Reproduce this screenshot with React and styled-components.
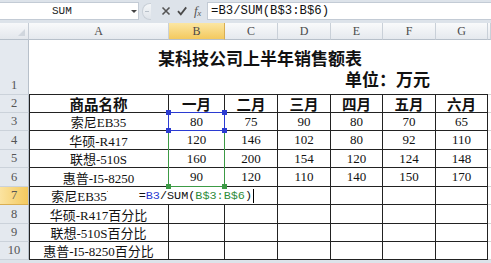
import React from 'react'
import styled, { createGlobalStyle } from 'styled-components'

const GlobalStyle = createGlobalStyle`
  html, body { margin: 0; padding: 0; background: #ffffff; }
  body { font-family: "Liberation Serif", "Noto Sans CJK SC", serif; }
`

const COLS = ['A', 'B', 'C', 'D', 'E', 'F', 'G']
const ROW_HEIGHTS = [18, 18, 19, 18, 19, 18, 19, 18, 18]

const ROWS = [
  { n: 2, bold: true, cells: ['商品名称', '一月', '二月', '三月', '四月', '五月', '六月'] },
  { n: 3, cells: ['索尼EB35', '80', '75', '90', '80', '70', '65'] },
  { n: 4, cells: ['华硕-R417', '120', '146', '102', '80', '92', '110'] },
  { n: 5, cells: ['联想-510S', '160', '200', '154', '120', '124', '148'] },
  { n: 6, cells: ['惠普-I5-8250', '90', '120', '110', '140', '150', '170'] },
  { n: 7, active: true, cells: ['索尼EB35百分比', '', '', '', '', '', ''] },
  { n: 8, cells: ['华硕-R417百分比', '', '', '', '', '', ''] },
  { n: 9, cells: ['联想-510S百分比', '', '', '', '', '', ''] },
  { n: 10, cells: ['惠普-I5-8250百分比', '', '', '', '', '', ''] },
]

const Window = styled.div`
  width: 491px;
  height: 263px;
  overflow: hidden;
  background: #dde3ea;
  display: flex;
  flex-direction: column;
`

/* FORMULA BAR */
const FormulaBar = styled.div`
  height: 18px;
  margin-top: 2px;
  margin-bottom: 3px;
  display: flex;
`

const NameBox = styled.div`
  width: 139px;
  box-sizing: border-box;
  background: #fff;
  border: 1px solid #c3cbd5;
  border-left: none;
  display: flex;
  align-items: center;
  padding-left: 52px;
  font-family: "Liberation Mono", monospace;
  font-size: 11px;
  color: #222;
  position: relative;
`

const DropArrow = styled.span`
  position: absolute;
  left: 131px;
  top: 7px;
  border-left: 3px solid transparent;
  border-right: 3px solid transparent;
  border-top: 3px solid #444;
`

const Tools = styled.div`
  width: 68px;
  display: flex;
  align-items: center;
  padding-left: 3px;
  box-sizing: border-box;
  gap: 6px;
`

const Grip = styled.span`
  width: 8px;
  height: 15px;
  border-radius: 8px 0 0 8px;
  border: 1px solid #c9d0d8;
  border-right: none;
  background: linear-gradient(#f4f6f8, #dfe4ea);
  margin-right: 4px;
  display: flex;
  align-items: center;
  justify-content: center;
  &::after {
    content: '';
    width: 4px;
    height: 1px;
    background: #b9c1ca;
  }
`

const ToolIcon = styled.svg`
  width: 10px;
  height: 10px;
  flex: none;
`

const Fx = styled.span`
  font-family: "Liberation Serif", serif;
  font-style: italic;
  font-size: 13px;
  color: #555;
  margin-left: 1px;
  letter-spacing: -0.5px;
  sub { font-size: 9px; vertical-align: -1px; }
`

const FormulaInput = styled.div`
  flex: 1;
  background: #fff;
  border: 1px solid #c3cbd5;
  border-right: none;
  display: flex;
  align-items: center;
  padding-left: 3px;
  font-family: "Liberation Mono", monospace;
  font-size: 12.3px;
  color: #111;
`

/* SHEET */
const Sheet = styled.div`
  display: grid;
  grid-template-columns: 29px 140px 56px 53px 53px 52px 53px 52px 1fr;
  grid-template-rows: 17px 55px ${ROW_HEIGHTS.map(h => h + 'px').join(' ')};
  background: #fff;
`

const Corner = styled.div`
  grid-row: 1;
  grid-column: 1;
  background: linear-gradient(#f7f8fa, #e3e7ec);
  border-right: 1px solid #c5ccd5;
  border-bottom: 1px solid #b7c0ca;
  box-sizing: border-box;
  position: relative;
  &::after {
    content: '';
    position: absolute;
    right: 3px;
    bottom: 3px;
    border-left: 7px solid transparent;
    border-bottom: 7px solid #d0d6dd;
  }
`

const ColHead = styled.div`
  grid-row: 1;
  grid-column: ${p => p.$c};
  background: ${p => p.$active
    ? 'linear-gradient(#fbe6a2, #f3c95e)'
    : 'linear-gradient(#f9fafb, #e5e9ee)'};
  border-right: 1px solid ${p => p.$active ? '#d9ae52' : '#c9d0d8'};
  border-bottom: 1px solid #b7c0ca;
  box-sizing: border-box;
  display: flex;
  align-items: center;
  justify-content: center;
  font-family: "Liberation Serif", serif;
  font-size: 12px;
  color: #4a4a4a;
`

const RowHead = styled.div`
  grid-row: ${p => p.$r};
  grid-column: 1;
  background: ${p => p.$active
    ? 'linear-gradient(90deg, #fbe3a0, #f3c95e)'
    : '#e4e9ef'};
  border-right: 1px solid #b7c0ca;
  border-bottom: 1px solid ${p => p.$active ? '#d9ae52' : '#cbd2da'};
  box-sizing: border-box;
  display: flex;
  align-items: flex-end;
  justify-content: center;
  padding-bottom: 1px;
  font-family: "Liberation Serif", serif;
  font-size: 12.5px;
  color: #555;
`

const TitleCell = styled.div`
  grid-row: 2;
  grid-column: 2 / 9;
  border-bottom: 1px solid #222;
  box-sizing: border-box;
  display: flex;
  flex-direction: column;
  font-family: "Noto Sans CJK SC", sans-serif;
  font-weight: 700;
  font-size: 17px;
  line-height: 21px;
  color: #111;
  padding-top: 7px;
`

const Title = styled.div`
  text-align: center;
  padding-left: 3px;
`

const Unit = styled.div`
  padding-left: 316px;
`

const Cell = styled.div`
  grid-row: ${p => p.$r};
  grid-column: ${p => p.$c};
  box-sizing: border-box;
  border-right: 1px solid ${p => p.$table ? '#222' : '#d4d4d4'};
  border-bottom: 1px solid ${p => p.$table ? '#222' : '#d4d4d4'};
  box-shadow: ${p => p.$first ? 'inset 1px 0 0 #222' : 'none'};
  display: flex;
  align-items: center;
  justify-content: center;
  white-space: nowrap;
  overflow: hidden;
  font-family: "Liberation Serif", "Noto Sans CJK SC", serif;
  font-size: ${p => p.$bold ? '14.5px' : '13px'};
  font-weight: ${p => p.$bold ? 700 : 400};
  color: #111;
`

const Filler = styled.div`
  grid-row: ${p => p.$r};
  grid-column: 9;
  border-bottom: 1px solid #d4d4d4;
  box-sizing: border-box;
`

/* reference highlights drawn over the grid */
const RefBox = styled.div`
  grid-column: 3;
  grid-row: ${p => p.$rows};
  margin: -1px 0 0 -1px;
  border: 1px solid ${p => p.$color};
  pointer-events: none;
  position: relative;
  z-index: ${p => p.$z};
`

const Handle = styled.span`
  position: absolute;
  width: 5px;
  height: 5px;
  background: ${p => p.$color};
  ${p => p.$top ? 'top: -3px;' : 'bottom: -3px;'}
  ${p => p.$left ? 'left: -3px;' : 'right: -3px;'}
`

const EditBox = styled.div`
  grid-column: 3;
  grid-row: 8;
  margin: 0 -31px 1px -61px;
  background: #fff;
  z-index: 2;
  display: flex;
  align-items: center;
  justify-content: flex-end;
  padding-right: 2px;
  font-family: "Liberation Mono", monospace;
  font-size: 11.8px;
  color: #111;
  white-space: nowrap;
`

const Ref = styled.span`
  color: ${p => p.$color};
`

const Caret = styled.span`
  width: 1px;
  height: 14px;
  background: #000;
  margin-left: 1px;
`

const Check = () => (
  <ToolIcon viewBox="0 0 10 10">
    <path d="M1 5.2 L3.8 8.3 L9.2 1.4" fill="none" stroke="#4a4a4a" strokeWidth="1.8" />
  </ToolIcon>
)

const Cross = () => (
  <ToolIcon viewBox="0 0 10 10">
    <path d="M1.5 1.5 L8.5 8.5 M8.5 1.5 L1.5 8.5" fill="none" stroke="#555" strokeWidth="1.6" />
  </ToolIcon>
)

const App = () => {
  return (
    <Window>
      <GlobalStyle />
      {/* NAME BOX + FORMULA */}
      <FormulaBar>
        <NameBox>
          SUM
          <DropArrow />
        </NameBox>
        <Tools>
          <Grip />
          <Cross />
          <Check />
          <Fx>f<sub>x</sub></Fx>
        </Tools>
        <FormulaInput>=B3/SUM(B$3:B$6)</FormulaInput>
      </FormulaBar>

      {/* GRID */}
      <Sheet>
        <Corner />
        {COLS.map((c, i) => <ColHead key={c} $c={i + 2} $active={c === 'B'}>{c}</ColHead>)}
        <ColHead $c={9} />

        <RowHead $r={2}>1</RowHead>
        <TitleCell>
          <Title>某科技公司上半年销售额表</Title>
          <Unit>单位：万元</Unit>
        </TitleCell>
        <Filler $r={2} />

        {ROWS.map(row => (
          <React.Fragment key={row.n}>
            <RowHead $r={row.n + 1} $active={row.active}>{row.n}</RowHead>
            {row.cells.map((v, i) => (
              <Cell key={i} $r={row.n + 1} $c={i + 2} $table $first={i === 0} $bold={row.bold}>{v}</Cell>
            ))}
            <Filler $r={row.n + 1} />
          </React.Fragment>
        ))}

        <RefBox $rows="4 / 8" $color="#3c9a45" $z={3}>
          <Handle $color="#3c9a45" />
          <Handle $color="#3c9a45" $left />
        </RefBox>
        <RefBox $rows="4" $color="#2b3bd1" $z={4}>
          <Handle $color="#2b3bd1" $top $left />
          <Handle $color="#2b3bd1" $top />
          <Handle $color="#2b3bd1" $left />
          <Handle $color="#2b3bd1" />
        </RefBox>

        <EditBox>
          =<Ref $color="#2b3bd1">B3</Ref>/SUM(<Ref $color="#2e8b3a">B$3:B$6</Ref>)
          <Caret />
        </EditBox>
      </Sheet>
    </Window>
  )
}

export default App
